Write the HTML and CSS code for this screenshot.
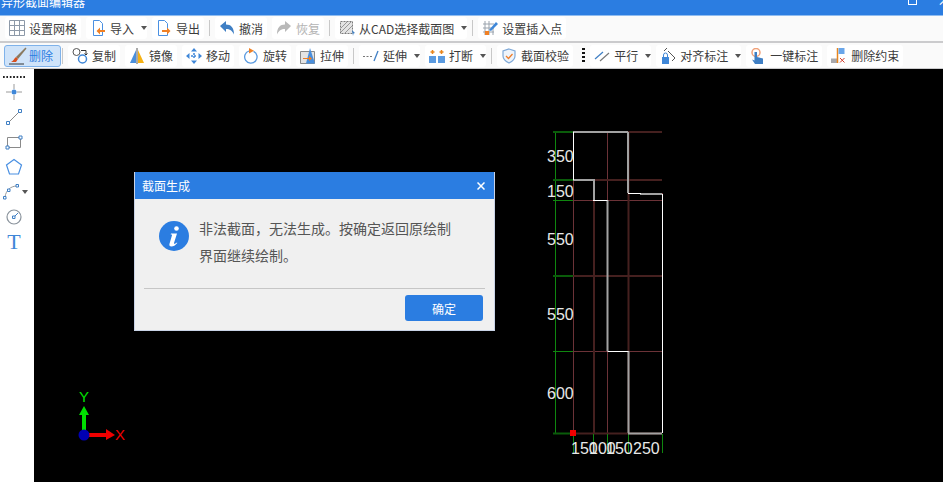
FILE: index.html
```html
<!DOCTYPE html>
<html lang="zh-CN">
<head>
    <meta charset="UTF-8">
    <title>异形截面编辑器</title>
    <link rel="stylesheet" href="styles.css">
</head>
<body>
    <div class="app">
        <div class="titlebar">
            <span class="title-text">异形截面编辑器</span>
            <span class="win-max"></span>
            <span class="win-close">×</span>
        </div>

        <div class="toolbar toolbar-top">
            <div class="tool">
                <svg class="icon" viewBox="0 0 16 16"><path d="M.5.5h15v15H.5zM5.5.5v15M10.5.5v15M.5 5.5h15M.5 10.5h15" fill="none" stroke="#8d99a8"/></svg>
                设置网格
            </div>
            <div class="tool">
                <svg class="icon" viewBox="0 0 16 16"><path d="M3.5.5h6l3 3v12h-9z" fill="#fff" stroke="#4a90e2"/><path d="M15 10H10V7.5L6.5 11l3.500 3.500V12H15z" fill="#f08024"/></svg>
                导入<span class="caret"></span>
            </div>
            <div class="tool">
                <svg class="icon" viewBox="0 0 16 16"><path d="M2.500.5h6l3 3v12h-9z" fill="#fff" stroke="#4a90e2"/><path d="M6 10h5V7.500l3.500 3.500-3.500 3.500V12H6z" fill="#f08024"/></svg>
                导出
            </div>
            <div class="sep"></div>
            <div class="tool">
                <svg class="icon" viewBox="0 0 16 16"><path d="M1 6l6-5v3.500c5 0 8 3 8 10-2-4-4-5.500-8-5.500V12z" fill="#3f7fc4"/></svg>
                撤消
            </div>
            <div class="tool tool-off">
                <svg class="icon" viewBox="0 0 16 16"><path d="M15 6L9 1v3.500c-5 0-8 3-8 10 2-4 4-5.500 8-5.500V12z" fill="#b9b9b9"/></svg>
                恢复
            </div>
            <div class="sep"></div>
            <div class="tool">
                <svg class="icon" viewBox="0 0 16 16"><path d="M1.500 1.500h12v12h-12z" fill="#e4e4e4" stroke="#7b7b7b" stroke-dasharray="2 1"/><path d="M2 12L12 2M2 8l6-6M6 13l7-7" stroke="#999"/><path d="M13 10l3 3-1.500.5L14 16z" fill="#3f7fc4"/></svg>
                从CAD选择截面图<span class="caret"></span>
            </div>
            <div class="sep"></div>
            <div class="tool">
                <svg class="icon" viewBox="0 0 16 16"><path d="M1 4h11M1 8h11M1 12h11M3 1v14M7 1v14M11 8v7" stroke="#9aa3ad" fill="none"/><path d="M7 10l7-8 2 2-7 7z" fill="#3f87d8"/><path d="M3 11h4v4H3z" fill="#f08024"/></svg>
                设置插入点
            </div>
        </div>

        <div class="toolbar toolbar-bottom">
            <div class="tool tool-active">
                <svg class="icon icon-brush" viewBox="0 0 18 18"><path d="M7 10L16.500.5l1 1L9 12z" fill="#8a7a60"/><path d="M7 10l2 2-2 3H2c2.500-1 3-3.500 5-5z" fill="#d8501e"/><path d="M0 17h15" stroke="#333"/></svg>
                删除
            </div>
            <div class="sep"></div>
            <div class="tool">
                <svg class="icon" viewBox="0 0 16 16"><circle cx="4.500" cy="4" r="3.500" fill="#fff" stroke="#555"/><circle cx="10.500" cy="11" r="4" fill="#fff" stroke="#3f87d8" stroke-width="1.500"/><path d="M9 2.500h5v4M12.500 5.500l1.500 1.500 1.500-1.500" fill="none" stroke="#333"/></svg>
                复制
            </div>
            <div class="tool">
                <svg class="icon" viewBox="0 0 16 16"><path d="M7 2v13H1z" fill="#4a8fdc"/><path d="M9 2v13h6z" fill="#f5b114"/><path d="M8 0v16" stroke="#555"/></svg>
                镜像
            </div>
            <div class="tool">
                <svg class="icon" viewBox="0 0 16 16"><path d="M8 0l3 3.500H5zM8 16l-3-3.500h6zM0 8l3.500-3v6zM16 8l-3.500 3V5z" fill="#3f87d8"/><path d="M8 5v6M5 8h6" stroke="#3f87d8" stroke-width="1.500" stroke-dasharray="2 1"/></svg>
                移动
            </div>
            <div class="tool">
                <svg class="icon" viewBox="0 0 16 16"><path d="M6 3a6.200 6.200 0 1 0 4.500.3" fill="none" stroke="#5a9ae0" stroke-width="1.300"/><path d="M6 0l5 2.800L6 5.500z" fill="#f08024"/></svg>
                旋转
            </div>
            <div class="tool">
                <svg class="icon" viewBox="0 0 16 16"><path d="M.5 3.500h14v12H.5z" fill="#e4e4e4" stroke="#8a8a8a"/><path d="M10 0l5 15.500H6z" fill="#4a8fdc"/><path d="M3 10h6V8l3 2.500L9 13v-2H3z" fill="#f08024"/></svg>
                拉伸
            </div>
            <div class="sep"></div>
            <div class="tool">
                <svg class="icon" viewBox="0 0 16 16"><path d="M0 8.500h2M3.500 8.500h2M7 8.500h2" stroke="#777"/><path d="M11 13l4-10" stroke="#3f7fc4" stroke-width="1.300"/></svg>
                延伸<span class="caret"></span>
            </div>
            <div class="tool">
                <svg class="icon" viewBox="0 0 16 16"><path d="M0 8h7v7H0zM9 8h7v7H9z" fill="#5a9ae0"/><path d="M3.500 2v4M1.500 4h4M12.500 2v4M10.500 4h4" stroke="#e8851c" stroke-width="1.500"/></svg>
                打断<span class="caret"></span>
            </div>
            <div class="sep"></div>
            <div class="tool">
                <svg class="icon" viewBox="0 0 16 16"><path d="M8 1l6 2v5c0 3.500-3 5.500-6 7-3-1.500-6-3.500-6-7V3z" fill="#eef4fb" stroke="#7fa9d8" stroke-width="1.200"/><path d="M5 8l2.500 2.500L11.500 6" fill="none" stroke="#ee7d2b" stroke-width="1.300"/></svg>
                截面校验
            </div>
            <div class="grip"></div>
            <div class="tool">
                <svg class="icon" viewBox="0 0 16 16"><path d="M1 11l8-7" stroke="#3f7fc4" stroke-width="1.200"/><path d="M6 13l9-8" stroke="#777" stroke-width="1.200"/></svg>
                平行<span class="caret"></span>
            </div>
            <div class="tool">
                <svg class="icon" viewBox="0 0 16 16"><path d="M2 9h7v7H2z" fill="#3f87d8"/><path d="M3.500 9V7a2 2 0 0 1 4 0v2" fill="none" stroke="#3f87d8"/><path d="M8 3l7 7M4 3l3-3M12 13l3-3" stroke="#555"/></svg>
                对齐标注<span class="caret"></span>
            </div>
            <div class="tool">
                <svg class="icon" viewBox="0 0 16 16"><circle cx="6" cy="4.500" r="4" fill="none" stroke="#f0a078" stroke-width="1.500"/><path d="M4.500 4h2.500v5l6 1.500V16H5L2 11.500l2.500 1z" fill="#3f7fc4"/></svg>
                一键标注
            </div>
            <div class="tool">
                <svg class="icon" viewBox="0 0 16 16"><path d="M0 10.500h6V15H0z" fill="#a9a9ad"/><path d="M6.500 0v15" stroke="#e8851c" stroke-width="1.500"/><path d="M7.500 0h6v6h-6z" fill="#6aa6ea"/><path d="M9 10l4.500 4.500M13.500 10L9 14.500" stroke="#d23c2a"/></svg>
                删除约束
            </div>
        </div>

        <div class="main">
            <div class="sidebar">
                <div class="side-dots"></div>
                <div class="side-tool">
                    <svg class="side-icon" viewBox="0 0 18 18"><path d="M9 1v5M9 12v5M1 9h5M12 9h5" stroke="#9a9a9a"/><circle cx="9" cy="9" r="2.500" fill="#3f87d8"/></svg>
                </div>
                <div class="side-tool">
                    <svg class="side-icon" viewBox="0 0 18 18"><path d="M3 15L15 3" stroke="#8a8a8a"/><path d="M1.500 13.500h3v3h-3zM13.500 1.500h3v3h-3z" fill="#fff" stroke="#3f7fc4"/></svg>
                </div>
                <div class="side-tool">
                    <svg class="side-icon" viewBox="0 0 18 18"><path d="M2.500 4.500h13v10h-13z" fill="none" stroke="#8a8a8a"/><path d="M1 13h3v3H1zM14 3h3v3h-3z" fill="#fff" stroke="#3f7fc4"/></svg>
                </div>
                <div class="side-tool">
                    <svg class="side-icon" viewBox="0 0 18 18"><path d="M9 1.500l7.500 5.500-3 9h-9l-3-9z" fill="none" stroke="#4a90e2" stroke-width="1.200"/></svg>
                </div>
                <div class="side-tool side-tool-wide">
                    <svg class="side-icon" viewBox="0 0 18 18"><path d="M2 14C3 7 8 3 14 3" fill="none" stroke="#9a9a9a"/><path d="M.5 13.500h2.500V16H.5zM4.500 6h2.500v2.500H4.500zM13 1.500h2.500V4H13z" fill="#fff" stroke="#3f7fc4"/></svg>
                    <span class="caret"></span>
                </div>
                <div class="side-tool">
                    <svg class="side-icon" viewBox="0 0 18 18"><circle cx="9" cy="9" r="7" fill="none" stroke="#8a939c" stroke-width="1.200"/><path d="M9 9l4-4" stroke="#3f7fc4"/><path d="M7.500 8h2.500v2.500H7.500z" fill="#fff" stroke="#3f7fc4"/></svg>
                </div>
                <div class="side-tool side-text">T</div>
            </div>

            <div class="canvas">
                <svg class="drawing" viewBox="34 69 909 413">
                    <g class="dim-grid">
                        <path d="M573.500 132V433M607.500 132V433M662.500 193V433"/>
                        <path d="M573 200.500H662M573 351.500H662"/>
                    </g>
                    <g class="dim-grid-dark">
                        <path d="M594 180V433M628.500 132V433"/>
                        <path d="M628 132H662M593 180H662M573 276H662M573 433.500H662"/>
                    </g>
                    <g class="dim-green">
                        <path d="M555.500 131V434M662.500 434V453"/>
                        <path d="M553 200.500H573M553 351.500H573"/>
                        <path d="M573.500 434V453M593.500 434V453M607.500 434V453M628.500 434V453"/>
                    </g>
                    <g class="dim-green-dark">
                        <path d="M553 132H573M553 180H573M553 276H573M553 433.500H573"/>
                    </g>
                    <g class="outline-gray">
                        <path d="M573 132H628M573 180H594V200M628 132V193M607.500 200V351M628.500 351V433M628 433.500H662M640 194H662"/>
                    </g>
                    <g class="outline-white">
                        <path d="M573.500 132V180M593 200.500H607.500M607.500 351.500H628.500M662.500 194V433M628 193.500H641"/>
                    </g>
                    <rect class="origin" x="570" y="430" width="6" height="6"/>

                    <g class="dim-labels">
                        <text x="547" y="162">350</text>
                        <text x="547" y="197">150</text>
                        <text x="547" y="245">550</text>
                        <text x="547" y="320">550</text>
                        <text x="547" y="399">600</text>
                        <text x="571" y="454">150</text>
                        <text x="589" y="454">100</text>
                        <text x="606" y="454">150</text>
                        <text x="633" y="454">250</text>
                    </g>

                    <path d="M82 432V415H79L84 406 89 415H86V432z" fill="#00e000"/>
                    <path d="M88 433H106V429L115 435 106 440V437H88z" fill="#f00000"/>
                    <circle cx="84" cy="435" r="5.500" fill="#0000b4"/>
                    <text class="axis axis-y" x="79" y="402">Y</text>
                    <text class="axis axis-x" x="115" y="440">X</text>
                </svg>

                <div class="dialog">
                    <div class="dialog-head">
                        <span>截面生成</span>
                        <svg class="dialog-close" viewBox="0 0 8 8"><path d="M.5.5l7 7M7.500.5l-7 7" stroke="#fff" stroke-width="1.500"/></svg>
                    </div>
                    <div class="dialog-body">
                        <svg class="info-icon" viewBox="0 0 30 30">
                            <circle cx="15" cy="15" r="15" fill="#2b7de1"/>
                            <circle cx="17.500" cy="7.500" r="2.300" fill="#fff"/>
                            <path d="M12 12.500h6L15 22c-.3 1.200.8 1.200 3-.5l.3.6c-2 2.500-3.800 3.400-6 3.400-1.500 0-2.300-1-1.800-2.700l2.500-8.500c.2-.8-.5-.8-1.300-.7z" fill="#fff"/>
                        </svg>
                        <p class="dialog-msg">非法截面，无法生成。按确定返回原绘制界面继续绘制。</p>
                    </div>
                    <div class="dialog-foot">
                        <button class="btn-ok">确定</button>
                    </div>
                </div>
            </div>
        </div>
    </div>
</body>
</html>
```

FILE: styles.css
```css
* {
    box-sizing: border-box;
}

html, body {
    margin: 0;
    padding: 0;
    overflow: hidden;
}

body {
    font-family: "Noto Sans CJK SC", "Liberation Sans", sans-serif;
    font-size: 12px;
    color: #3c3c3c;
}

.app {
    display: flex;
    flex-direction: column;
    width: 943px;
    height: 482px;
    background-color: #fff;
}

.titlebar {
    display: flex;
    align-items: flex-end;
    height: 16px;
    flex: none;
    overflow: hidden;
    padding-left: 1px;
    padding-bottom: 7px;
    background-color: #2b7de1;
    border-bottom: 1px solid #8fbcf0;
    color: #fff;
}

.title-text {
    line-height: 12px;
    flex: 1;
}

.win-max {
    width: 9px;
    height: 9px;
    margin-right: 20px;
    margin-bottom: 3px;
    border: 1px solid #fff;
}

.win-close {
    width: 6px;
    margin-bottom: 3px;
    font-size: 14px;
    line-height: 12px;
    overflow: hidden;
}

.toolbar {
    display: flex;
    align-items: center;
    gap: 5px;
    flex: none;
    background-color: #fafafa;
}

.toolbar-top {
    height: 27px;
    padding-left: 5px;
    padding-bottom: 1px;
    border-bottom: 2px solid #cbcbcd;
}

.toolbar-bottom {
    height: 26px;
    padding-left: 4px;
    border-bottom: 1px solid #cbcbcd;
}

.tool {
    display: flex;
    align-items: center;
    height: 22px;
    padding: 0 4px;
    gap: 4px;
    background-color: #fff;
    border-radius: 3px;
    white-space: nowrap;
}

.tool-off {
    color: #b4b4b4;
}

.tool-active {
    width: 57px;
    padding-left: 4px;
    margin-right: -4px;
    color: #2b7de1;
    background-color: #cfe3f9;
    border: 1px solid #7fb2ea;
}

.icon {
    width: 16px;
    height: 16px;
    flex: none;
}

.icon-brush {
    width: 18px;
    height: 18px;
    margin-right: -2px;
}

.caret {
    width: 0;
    height: 0;
    margin-left: 3px;
    border-left: 3px solid transparent;
    border-right: 3px solid transparent;
    border-top: 4px solid #555;
}

.tool:has(.caret) {
    padding-right: 0;
}

.sep {
    width: 1px;
    height: 16px;
    background-color: #c8c8c8;
}

.grip {
    width: 3px;
    height: 15px;
    margin-left: 4px;
    background-image: linear-gradient(#111 2px, transparent 2px);
    background-size: 3px 4px;
}

.main {
    display: flex;
    flex: 1;
    min-height: 0;
}

.sidebar {
    display: flex;
    flex-direction: column;
    gap: 1px;
    width: 34px;
    flex: none;
    padding: 7px 0 0 4px;
    background-color: #fff;
}

.side-dots {
    width: 22px;
    height: 2px;
    margin: 0 0 1px -1px;
    background-image: linear-gradient(90deg, #222 2px, transparent 2px);
    background-size: 3.400px 2px;
}

.side-tool {
    display: flex;
    align-items: center;
    justify-content: center;
    width: 20px;
    height: 24px;
    flex: none;
    border-radius: 3px;
}

.side-tool-wide {
    width: 24px;
    margin-left: -1px;
    justify-content: flex-start;
}

.side-tool-wide .caret {
    margin-left: 1px;
}

.side-icon {
    width: 18px;
    height: 18px;
    flex: none;
}

.side-text {
    font-family: "Liberation Serif", serif;
    font-size: 22px;
    color: #3f87d8;
}

.canvas {
    position: relative;
    flex: 1;
    background-color: #000;
}

.drawing {
    display: block;
    width: 909px;
    height: 413px;
}

.dim-grid path {
    fill: none;
    stroke: #6b3237;
}

.dim-grid-dark path {
    fill: none;
    stroke: #45201f;
    stroke-width: 2;
}

.dim-green path {
    fill: none;
    stroke: #0f860f;
}

.dim-green-dark path {
    fill: none;
    stroke: #0a5c0a;
    stroke-width: 2;
}

.outline-gray path {
    fill: none;
    stroke: #a2a2a2;
    stroke-width: 2;
}

.outline-white path {
    fill: none;
    stroke: #fff;
}

.origin {
    fill: #f00000;
}

.dim-labels text {
    font-family: "Liberation Sans", sans-serif;
    font-size: 16px;
    fill: #e8e8e8;
}

.axis {
    font-family: "Liberation Sans", sans-serif;
    font-size: 15px;
}

.axis-y {
    fill: #00e000;
}

.axis-x {
    fill: #f00000;
}

/* message box sits on top of the canvas */
.dialog {
    position: absolute;
    left: 100px;
    top: 103px;
    width: 361px;
    height: 159px;
    display: flex;
    flex-direction: column;
    background-color: #f0f0f0;
    border: 1px solid #c9d3e6;
    border-top: none;
}

.dialog-head {
    display: flex;
    justify-content: space-between;
    align-items: center;
    height: 27px;
    flex: none;
    padding: 0 9px 0 7px;
    background-color: #2b7de1;
    color: #fff;
}

.dialog-close {
    width: 8px;
    height: 8px;
}

.dialog-body {
    display: flex;
    gap: 10px;
    flex: 1;
    padding: 22px 0 0 24px;
}

.info-icon {
    width: 30px;
    height: 30px;
    flex: none;
}

.dialog-msg {
    width: 256px;
    margin: -6px 0 0;
    font-size: 14px;
    line-height: 27px;
    color: #555;
}

.dialog-foot {
    display: flex;
    justify-content: flex-end;
    height: 42px;
    flex: none;
    margin: 0 9px;
    padding: 6px 2px 0 0;
    border-top: 1px solid #c6c6c6;
}

.btn-ok {
    width: 78px;
    height: 26px;
    padding: 0;
    border: none;
    border-radius: 3px;
    background-color: #2b7de1;
    color: #fff;
    font-family: inherit;
    font-size: 12px;
}
```
